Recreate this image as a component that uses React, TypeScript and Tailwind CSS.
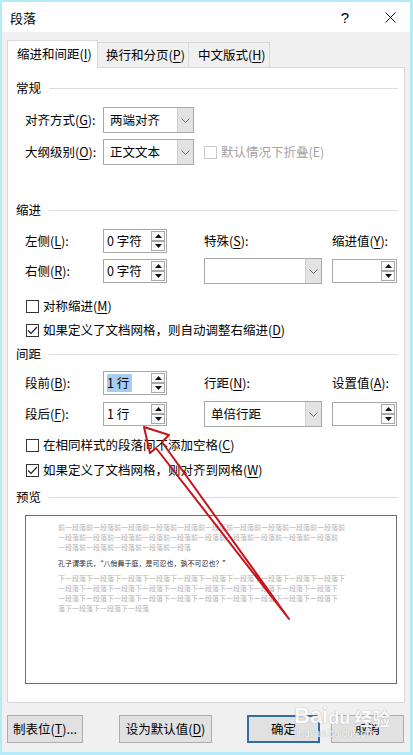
import React from 'react';

const Key = ({ k }: { k: string }) => <span className="underline underline-offset-[2px]">{k}</span>;

function Section({ title }: { title: string }) {
  return (
    <div className="flex items-center h-[16px] pl-[8px] mr-[6px]">
      <span>{title}</span>
      <div className="flex-1 h-px bg-[#dcdcdc] ml-[8px]" />
    </div>
  );
}

function Chevron() {
  return (
    <svg width="9" height="5" viewBox="0 0 9 5">
      <path d="M0.5 0.5 L4.5 4.5 L8.5 0.5" stroke="#6b6b6b" strokeWidth="1" fill="none" />
    </svg>
  );
}

function Select({ value, className }: { value?: string; className: string }) {
  return (
    <div className={`flex h-[26px] border border-[#a8a8a8] bg-white ${className}`}>
      <div className="flex-1 flex items-center pl-[6px]">{value}</div>
      <div className="w-[16px] bg-[#e3e3e3] border-l border-[#cfcfcf] flex items-center justify-center">
        <Chevron />
      </div>
    </div>
  );
}

function SpinBtn({ up }: { up?: boolean }) {
  return (
    <div className="w-[14px] h-[10px] border border-[#a9a9a9] bg-[#fafafa] flex items-center justify-center">
      <svg width="7" height="4" viewBox="0 0 7 4">
        {up ? <polygon points="0,4 3.5,0 7,4" fill="#111" /> : <polygon points="0,0 3.5,4 7,0" fill="#111" />}
      </svg>
    </div>
  );
}

function Spin({ value, selected, className }: { value?: string; selected?: boolean; className: string }) {
  return (
    <div className={`flex h-[24px] border border-[#a8a8a8] bg-white ${className}`}>
      <div className="flex-1 flex items-center pl-[3px]">
        {value && <span className={selected ? 'bg-[#a6cdf0] py-[3px] pr-[3px]' : ''}>{value}</span>}
      </div>
      <div className="flex flex-col justify-between py-[1px] pr-[1px]">
        <SpinBtn up />
        <SpinBtn />
      </div>
    </div>
  );
}

function Check({ checked, disabled, children }: { checked?: boolean; disabled?: boolean; children: React.ReactNode }) {
  return (
    <div className={`flex items-center h-[16px] ${disabled ? 'text-[#a3a3a3]' : ''}`}>
      <div
        className={`w-[13px] h-[13px] border bg-white flex items-center justify-center ${
          disabled ? 'border-[#cccccc]' : 'border-[#333333]'
        }`}
      >
        {checked && (
          <svg width="11" height="9" viewBox="0 0 11 9">
            <path d="M1 4.5 L4 7.5 L10 1" stroke="#222" strokeWidth="1.2" fill="none" />
          </svg>
        )}
      </div>
      <span className="ml-[4px]">{children}</span>
    </div>
  );
}

function Button({ children, className }: { children: React.ReactNode; className: string }) {
  return (
    <div className={`h-[28px] flex items-center justify-center bg-[#e1e1e1] ${className}`}>{children}</div>
  );
}

const rep = (s: string, n: number) => Array(n).fill(s).join('');

export default function App() {
  return (
    <div className="relative w-[413px] h-[755px] flex flex-col border-t-2 border-l-2 border-r-[3px] border-b-[3px] border-[#b4ebf8] font-['Noto_Sans_CJK_SC',sans-serif] text-[12.5px] leading-none text-black whitespace-nowrap overflow-hidden">
      {/* title bar */}
      <div className="h-[30px] bg-white flex items-center pl-[8px] pr-[14px]">
        <span className="text-[13px]">段落</span>
        <span className="ml-auto text-[15px] font-['Liberation_Sans',sans-serif]">?</span>
        <svg className="ml-[36px]" width="11" height="11" viewBox="0 0 11 11">
          <path d="M0.5 0.5 L10.5 10.5 M10.5 0.5 L0.5 10.5" stroke="#111" strokeWidth="1" />
        </svg>
      </div>

      <div className="flex-1 bg-[#f0f0f0] px-[5px] pt-[8px]">
        {/* tabs */}
        <div className="flex items-end h-[27px]">
          <div className="relative z-10 h-[28px] w-[91px] -mb-px bg-white border-t border-l border-r border-[#d9d9d9] flex items-center pl-[9px]">
            缩进和间距(<Key k="I" />)
          </div>
          <div className="h-[25px] w-[91px] border-t border-r border-[#d9d9d9] flex items-center pl-[8px]">
            换行和分页(<Key k="P" />)
          </div>
          <div className="h-[25px] w-[81px] border-t border-r border-[#d9d9d9] flex items-center pl-[9px]">
            中文版式(<Key k="H" />)
          </div>
        </div>

        {/* panel */}
        <div className="h-[636px] bg-white border border-[#d9d9d9] pt-[12px]">
          <Section title="常规" />
          <div className="flex items-center h-[26px] mt-[11px] pl-[17px]">
            <div className="w-[78px]">对齐方式(<Key k="G" />):</div>
            <Select value="两端对齐" className="w-[91px]" />
          </div>
          <div className="flex items-center h-[26px] mt-[6px] pl-[17px]">
            <div className="w-[78px]">大纲级别(<Key k="O" />):</div>
            <Select value="正文文本" className="w-[91px]" />
            <div className="ml-[10px]">
              <Check disabled>默认情况下折叠(E)</Check>
            </div>
          </div>

          <div className="mt-[37px]">
            <Section title="缩进" />
          </div>
          <div className="flex items-center h-[26px] mt-[10px] pl-[17px]">
            <div className="w-[78px]">左侧(<Key k="L" />):</div>
            <Spin value="0 字符" className="w-[64px]" />
            <div className="ml-[37px] w-[118px]">特殊(<Key k="S" />):</div>
            <div className="ml-[10px]">缩进值(<Key k="Y" />):</div>
          </div>
          <div className="flex items-center h-[26px] mt-[4px] pl-[17px]">
            <div className="w-[78px]">右侧(<Key k="R" />):</div>
            <Spin value="0 字符" className="w-[64px]" />
            <Select className="ml-[37px] w-[118px]" />
            <Spin className="ml-[10px] w-[65px]" />
          </div>
          <div className="mt-[14px] pl-[18px]">
            <Check>对称缩进(<Key k="M" />)</Check>
          </div>
          <div className="mt-[8px] pl-[18px]">
            <Check checked>如果定义了文档网格，则自动调整右缩进(<Key k="D" />)</Check>
          </div>

          <div className="mt-[8px]">
            <Section title="间距" />
          </div>
          <div className="flex items-center h-[26px] mt-[8px] pl-[17px]">
            <div className="w-[78px]">段前(<Key k="B" />):</div>
            <Spin value="1 行" selected className="w-[64px]" />
            <div className="ml-[37px] w-[118px]">行距(<Key k="N" />):</div>
            <div className="ml-[10px]">设置值(<Key k="A" />):</div>
          </div>
          <div className="flex items-center h-[26px] mt-[5px] pl-[17px]">
            <div className="w-[78px]">段后(<Key k="F" />):</div>
            <Spin value="1 行" className="w-[64px]" />
            <Select value="单倍行距" className="ml-[37px] w-[118px]" />
            <Spin className="ml-[10px] w-[65px]" />
          </div>
          <div className="mt-[10px] pl-[18px]">
            <Check>在相同样式的段落间不添加空格(<Key k="C" />)</Check>
          </div>
          <div className="mt-[9px] pl-[18px]">
            <Check checked>如果定义了文档网格，则对齐到网格(<Key k="W" />)</Check>
          </div>

          <div className="mt-[11px]">
            <Section title="预览" />
          </div>
          <div className="mt-[10px] ml-[17px] w-[372px] h-[169px] border border-[#6e6e6e] bg-white pl-[32px] pt-[6px] text-[7px] leading-[10px]">
            <div className="text-[#b4b4b4]">
              <div>{rep('前一段落', 10) + '前'}</div>
              <div>{rep('一段落前', 10)}</div>
              <div>一段落前一段落前一段落前一段落前一段落</div>
            </div>
            <div className="mt-[6px] text-[#2a2a2a]">孔子谓季氏，“八佾舞于庭，是可忍也，孰不可忍也？”</div>
            <div className="mt-[5px] text-[#b4b4b4]">
              <div>{rep('下一段落', 10) + '下'}</div>
              <div>{rep('一段落下', 10)}</div>
              <div>{rep('一段落下', 10)}</div>
              <div>落下一段落下一段落下一段落</div>
            </div>
          </div>
        </div>

        {/* buttons */}
        <div className="flex mt-[12px]">
          <Button className="w-[76px] border border-[#adadad]">
            制表位(<Key k="T" />)...
          </Button>
          <Button className="ml-[36px] w-[93px] border border-[#adadad]">
            设为默认值(<Key k="D" />)
          </Button>
          <Button className="ml-[35px] w-[73px] border-2 border-[#2f6fa6]">确定</Button>
          <Button className="ml-[11px] w-[73px] border border-[#adadad]">取消</Button>
        </div>
      </div>

      {/* red annotation arrow */}
      <svg className="absolute left-0 top-0 pointer-events-none" width="413" height="755" viewBox="0 0 413 755">
        <polygon
          points="142,425 167,433 160,440 287,617 154,446 148,451"
          fill="none"
          stroke="#c8151c"
          strokeWidth="2"
          strokeLinejoin="round"
        />
      </svg>

      {/* watermark */}
      <div className="absolute left-[292px] top-[703px] pointer-events-none text-white opacity-90 [text-shadow:0_0_1px_#8a8a8a]">
        <div className="flex items-end font-['Liberation_Sans',sans-serif] font-bold text-[22px] leading-none">
          <span>Bai</span>
          <span className="text-[18px]">du</span>
          <span className="ml-[4px] text-[18px] font-['Noto_Sans_CJK_SC',sans-serif]">经验</span>
        </div>
        <div className="mt-[2px] text-[10px] leading-none font-['Liberation_Sans',sans-serif]">jingyan.baidu.com</div>
      </div>
    </div>
  );
}
